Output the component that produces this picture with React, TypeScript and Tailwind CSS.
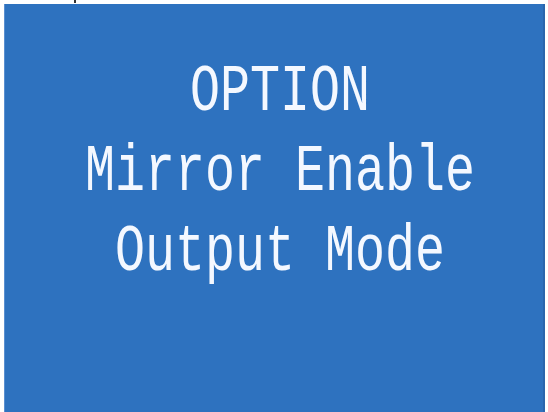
import React from "react";

export default function App() {
  const lines = ["OPTION", "Mirror Enable", "Output Mode"];

  return (
    <div className="w-[548px] h-[412px] bg-white flex flex-col overflow-hidden">
      {/* clipped speck of the caption above the screen */}
      <div className="h-[4px] shrink-0 pl-[74px]">
        <div className="w-[2px] h-[3px] bg-[#333]" />
      </div>

      <div className="flex-1 ml-[4px] mr-[3px] bg-[#2e72bf] border-l border-l-[#5a8fd0] border-r-2 border-r-[#2a66ad] pt-[48px] pl-[12px] flex flex-col items-center">
        {lines.map((line) => (
          <div
            key={line}
            className="h-[80px] leading-[80px] text-[50px] text-[#f4f8ff] whitespace-pre font-['Liberation_Mono',monospace] scale-y-[1.35]"
          >
            {line}
          </div>
        ))}
      </div>
    </div>
  );
}
